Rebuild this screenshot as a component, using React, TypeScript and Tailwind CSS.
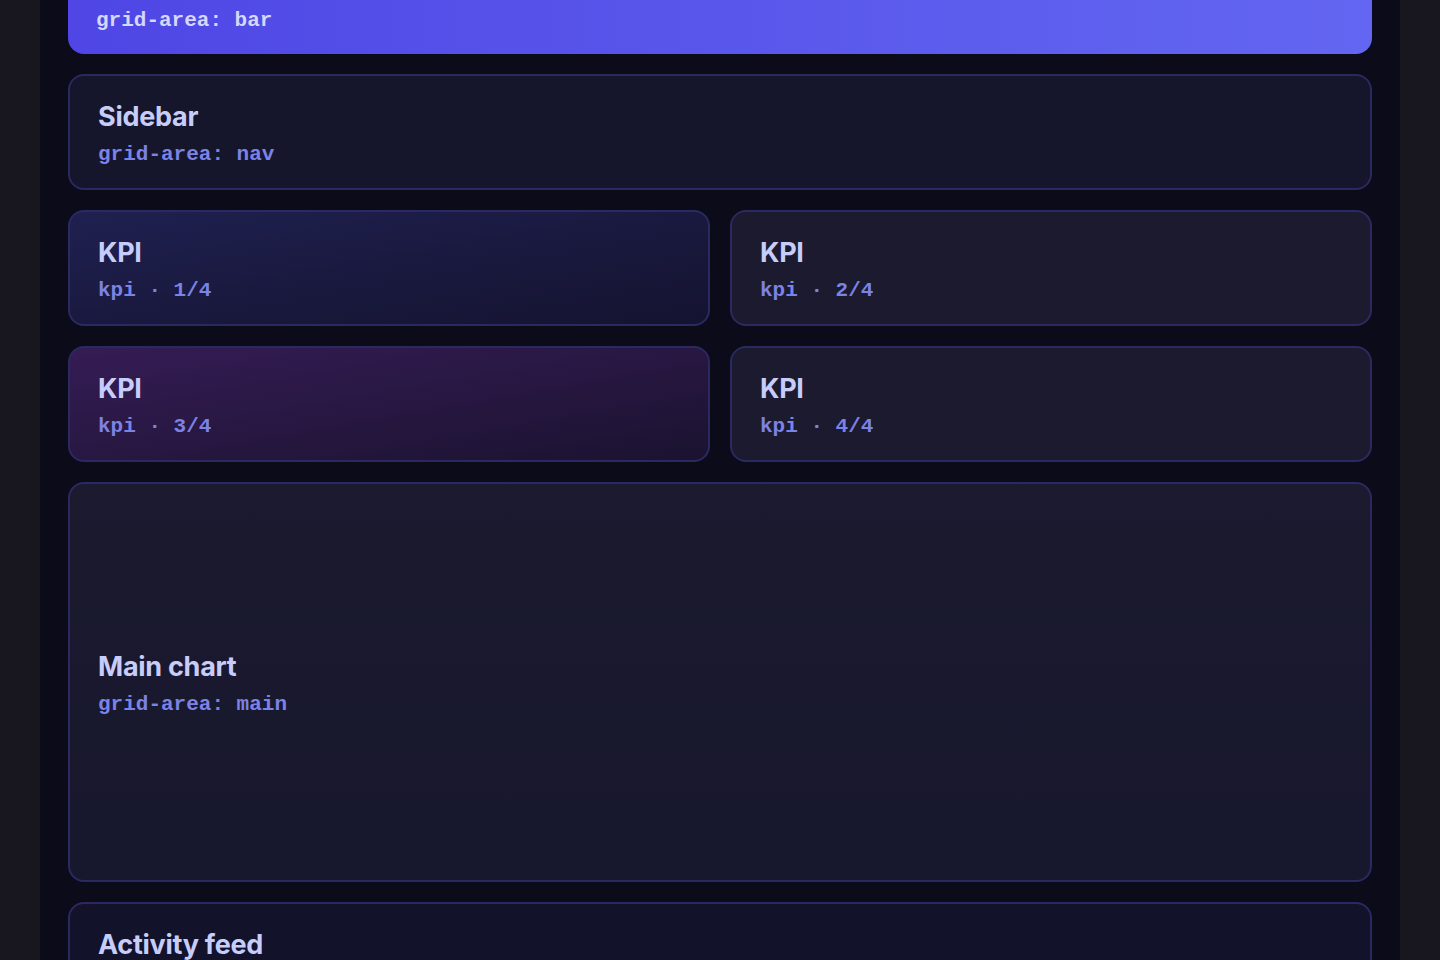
const mono = "font-['Courier_New','Nimbus_Mono_PS','FreeMono','Liberation_Mono',monospace]"

type CardProps = {
  title: string
  label: string
  className?: string
}

function Card({ title, label, className = '' }: CardProps) {
  return (
    <div
      className={[
        'flex flex-col rounded-2xl border-2 border-[#2a2960] px-7 pt-[26px] pb-5',
        className,
      ].join(' ')}
    >
      <h2 className="text-[27px] font-bold leading-[30px] tracking-[-0.01em] text-[#c7cdfb]">{title}</h2>
      <p className={`${mono} mt-[10px] text-[21px] font-semibold leading-[26px] text-[#7b83e6]`}>{label}</p>
    </div>
  )
}

export default function App() {
  return (
    <div className="min-h-screen bg-[#18171f] font-['Inter','Noto_Sans',sans-serif]">
      <main className="mx-10 h-[960px] overflow-hidden bg-[#0c0b1a] px-7">
        <div className="-mt-[59px] grid grid-cols-2 gap-5">
          <div className="col-span-2 flex flex-col rounded-2xl bg-gradient-to-r from-[#4f46e5] to-[#6366f1] px-7 pt-[26px] pb-5">
            <h2 className="text-[27px] font-bold leading-[30px] text-[#e0e4ff]">Top bar</h2>
            <p className={`${mono} mt-[11px] text-[21px] font-semibold leading-[26px] text-[#d4d8fb]`}>grid-area: bar</p>
          </div>

          <Card title="Sidebar" label="grid-area: nav" className="col-span-2 bg-[#15152b]" />

          <Card title="KPI" label="kpi · 1/4" className="bg-gradient-to-br from-[#1f2050] to-[#141330]" />
          <Card title="KPI" label="kpi · 2/4" className="bg-[#1b1a2e]" />
          <Card title="KPI" label="kpi · 3/4" className="bg-gradient-to-br from-[#351c55] to-[#1b1230]" />
          <Card title="KPI" label="kpi · 4/4" className="bg-[#1b1a2e]" />

          <Card
            title="Main chart"
            label="grid-area: main"
            className="col-span-2 h-[400px] justify-center bg-gradient-to-b from-[#1b1a2f] to-[#17172d]"
          />

          <Card title="Activity feed" label="grid-area: feed" className="col-span-2 h-[300px] bg-[#13122b]" />
        </div>
      </main>
    </div>
  )
}
